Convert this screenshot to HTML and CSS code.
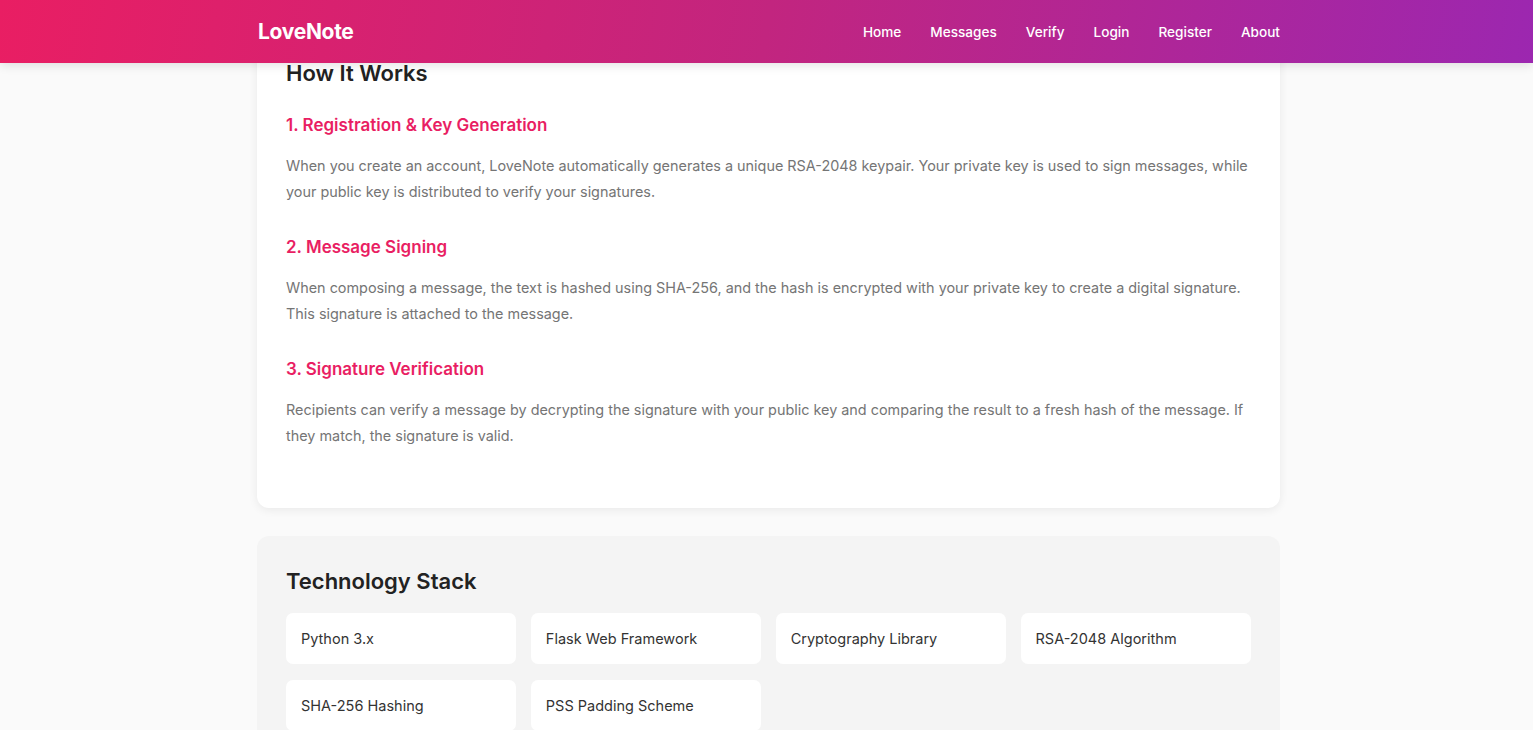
FILE: index.html
```html
<!DOCTYPE html>
<html lang="en">
<head>
<meta charset="utf-8">
<title>LoveNote - About</title>
<link rel="stylesheet" href="styles.css">
</head>
<body>
<header class="topbar">
  <div class="container topbar-inner">
    <a class="logo" href="#">LoveNote</a>
    <nav class="nav">
      <a href="#">Home</a>
      <a href="#">Messages</a>
      <a href="#">Verify</a>
      <a href="#">Login</a>
      <a href="#">Register</a>
      <a href="#">About</a>
    </nav>
  </div>
</header>
<main class="container main">
  <section class="card">
    <h2>How It Works</h2>
    <h3>1. Registration &amp; Key Generation</h3>
    <p>When you create an account, LoveNote automatically generates a unique RSA-2048 keypair. Your private key is used to sign messages, while your public key is distributed to verify your signatures.</p>
    <h3>2. Message Signing</h3>
    <p>When composing a message, the text is hashed using SHA-256, and the hash is encrypted with your private key to create a digital signature. This signature is attached to the message.</p>
    <h3>3. Signature Verification</h3>
    <p>Recipients can verify a message by decrypting the signature with your public key and comparing the result to a fresh hash of the message. If they match, the signature is valid.</p>
  </section>
  <section class="card card-muted">
    <h2>Technology Stack</h2>
    <div class="stack">
      <div class="stack-item">Python 3.x</div>
      <div class="stack-item">Flask Web Framework</div>
      <div class="stack-item">Cryptography Library</div>
      <div class="stack-item">RSA-2048 Algorithm</div>
      <div class="stack-item">SHA-256 Hashing</div>
      <div class="stack-item">PSS Padding Scheme</div>
    </div>
  </section>
</main>
</body>
</html>
```
FILE: styles.css
```css
* { box-sizing: border-box; }
html, body { margin: 0; padding: 0; }
body {
  background: #fafafa;
  font-family: Inter, "Noto Sans", Roboto, sans-serif;
  color: #222;
}
.container {
  width: 1023px;
  margin-left: 257px;
}
.topbar {
  position: sticky;
  top: 0;
  z-index: 10;
  height: 63px;
  background: linear-gradient(100deg, #e91e63 0%, #c2257f 50%, #9c27b0 100%);
  box-shadow: 0 2px 10px rgba(0,0,0,0.12);
}
.topbar-inner {
  height: 63px;
  display: flex;
  align-items: center;
  justify-content: space-between;
}
.logo {
  color: #fff;
  text-decoration: none;
  font-size: 21px;
  font-weight: 700;
  letter-spacing: -0.3px;
  margin-left: 1px;
}
.nav {
  display: flex;
  gap: 29px;
}
.nav a {
  color: #fff;
  text-decoration: none;
  font-size: 13.6px;
  font-weight: 500;
}
.main {
  margin-top: -32px;
  padding-bottom: 40px;
}
.card {
  background: #fff;
  border-radius: 12px;
  padding: 29px 29px 27px;
  box-shadow: 0 2px 10px rgba(0,0,0,0.07);
  margin-bottom: 28px;
}
.card h2 {
  margin: 0 0 29px;
  font-size: 22px;
  line-height: 26px;
  font-weight: 600;
  color: #222;
}
.card h3 {
  margin: 0 0 17px;
  font-size: 17px;
  line-height: 21px;
  font-weight: 600;
  color: #e91e63;
}
.card p {
  margin: 0 0 32px;
  font-size: 14.4px;
  line-height: 26px;
  color: #757575;
}
.card-muted {
  background: #f4f4f4;
  box-shadow: none;
  padding-top: 32px;
}
.card-muted h2 {
  margin-bottom: 19px;
}
.stack {
  display: grid;
  grid-template-columns: repeat(4, 1fr);
  gap: 16px 14.4px;
}
.stack-item {
  background: #fff;
  border-radius: 7px;
  height: 51px;
  display: flex;
  align-items: center;
  padding: 0 15px;
  font-size: 14.5px;
  font-weight: 400;
  color: #333;
}
```
